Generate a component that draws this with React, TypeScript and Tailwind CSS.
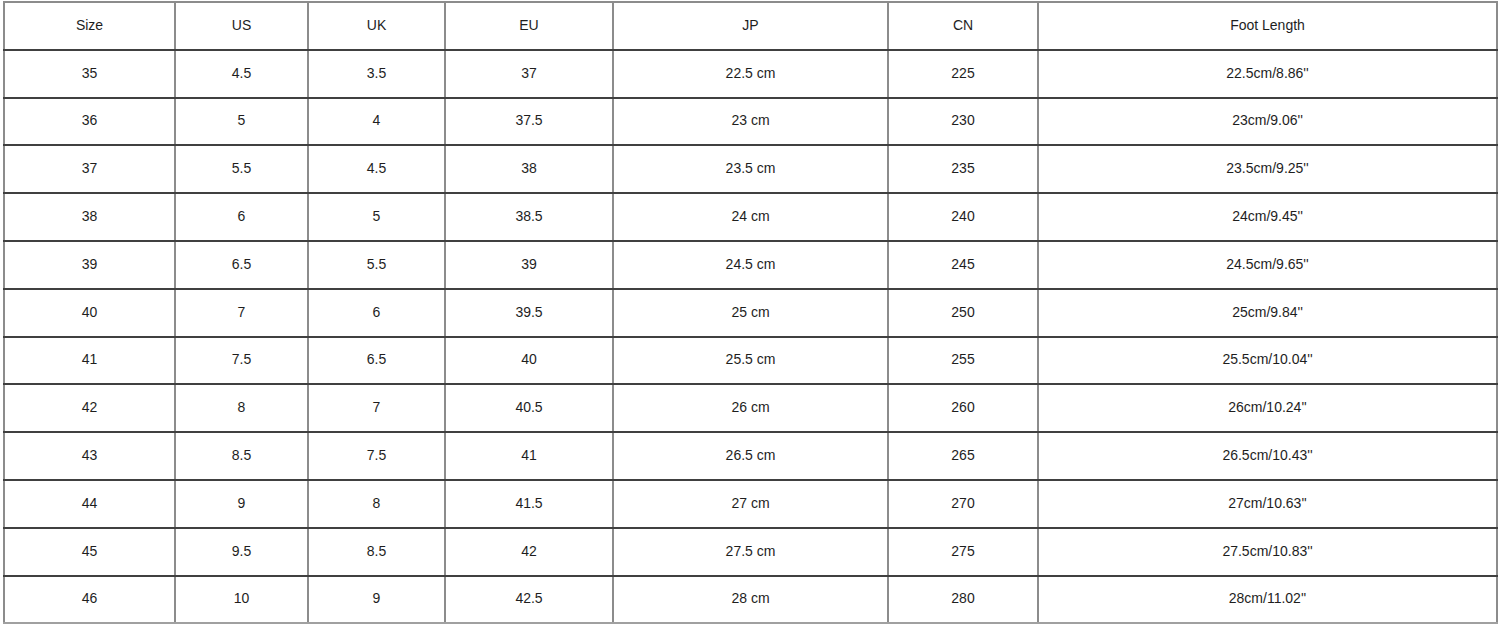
import React from "react";

const header = ["Size", "US", "UK", "EU", "JP", "CN", "Foot Length"];
const rows: string[][] = [
  ["35", "4.5", "3.5", "37", "22.5 cm", "225", "22.5cm/8.86''"],
  ["36", "5", "4", "37.5", "23 cm", "230", "23cm/9.06''"],
  ["37", "5.5", "4.5", "38", "23.5 cm", "235", "23.5cm/9.25''"],
  ["38", "6", "5", "38.5", "24 cm", "240", "24cm/9.45''"],
  ["39", "6.5", "5.5", "39", "24.5 cm", "245", "24.5cm/9.65''"],
  ["40", "7", "6", "39.5", "25 cm", "250", "25cm/9.84''"],
  ["41", "7.5", "6.5", "40", "25.5 cm", "255", "25.5cm/10.04''"],
  ["42", "8", "7", "40.5", "26 cm", "260", "26cm/10.24''"],
  ["43", "8.5", "7.5", "41", "26.5 cm", "265", "26.5cm/10.43''"],
  ["44", "9", "8", "41.5", "27 cm", "270", "27cm/10.63''"],
  ["45", "9.5", "8.5", "42", "27.5 cm", "275", "27.5cm/10.83''"],
  ["46", "10", "9", "42.5", "28 cm", "280", "28cm/11.02''"],
];

const widths = ["w-[171px]", "w-[133px]", "w-[137px]", "w-[168px]", "w-[275px]", "w-[150px]", "w-[459px]"];

export default function App() {
  const all = [header, ...rows];
  return (
    <div className="w-[1500px] h-[628px] bg-white pl-[3px] pt-[1px]" style={{ fontFamily: '"Liberation Sans", Arial, sans-serif' }}>
      <table className="table-fixed border-collapse w-[1493px] border-2 border-[#9a9a9a]">
        <colgroup>
          {widths.map((w, i) => (
            <col key={i} className={w} />
          ))}
        </colgroup>
        <tbody>
          {all.map((r, ri) => (
            <tr key={ri} className="h-[47.8px]">
              {r.map((c, ci) => (
                <td
                  key={ci}
                  className={
                    "text-center align-middle text-[14px] text-[#1e1e1e] p-0 pb-[1px] border-x-2 border-x-[#8c8c8c] " +
                    (ri === 0 ? "border-t-2 border-t-[#8c8c8c] " : "border-t-2 border-t-[#404040] ") +
                    (ri === all.length - 1 ? "border-b-2 border-b-[#a0a0a0]" : "border-b-2 border-b-[#404040]")
                  }
                >
                  {c}
                </td>
              ))}
            </tr>
          ))}
        </tbody>
      </table>
    </div>
  );
}
